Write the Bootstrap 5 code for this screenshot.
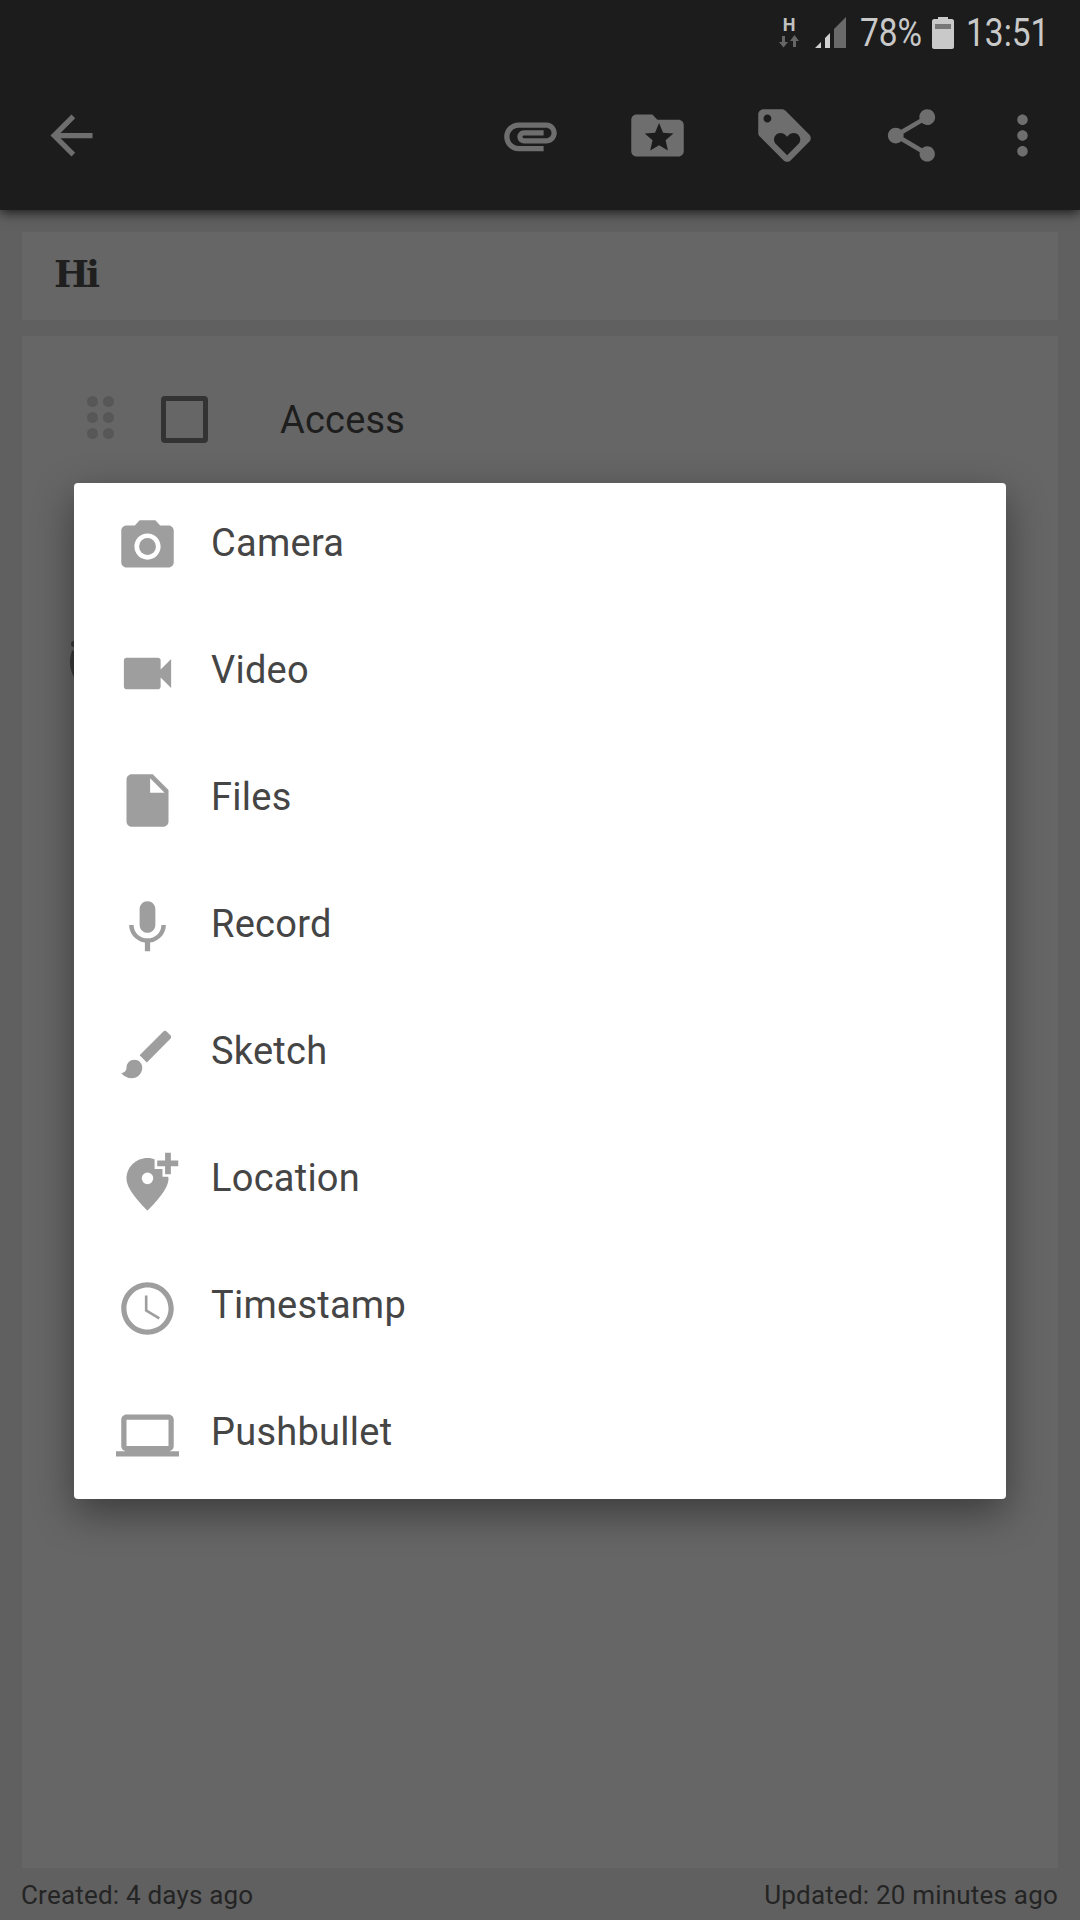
<!DOCTYPE html>
<html lang="en">
<head>
<meta charset="UTF-8" />
<meta name="viewport" content="width=device-width, initial-scale=1.0"/>
<title>Note attachments</title>
<link href="https://cdn.jsdelivr.net/npm/bootstrap@5.3.0/dist/css/bootstrap.min.css" rel="stylesheet">
<style>
  html, body { height: 1920px; overflow: hidden; }
  body { background: #606060; font-family: Roboto, sans-serif; color: #262626; position: relative; }
  .app-top { background: #1c1c1c; height: 210px; box-shadow: 0 2px 12px rgba(0,0,0,.8); position: relative; }
  .status-row { height: 66px; padding-right: 33px; color: #c9c9c9; font-size: 38px; line-height: 66px; }
  .status-text { display: block; transform: scaleX(.88); white-space: nowrap; flex: none; }
  .pct { width: 71px; transform-origin: left center; margin: 0 1px 0 12px; }
  .clock { width: 92px; transform-origin: right center; text-align: right; margin-left: 1px; }
  .net-icon { margin-right: 15px; }
  .tool-row { height: 144px; padding: 0 0 6px 40px; }
  .tool-row svg { width: 63px; height: 63px; fill: #6e6e6e; display: block; }
  .tool-icons { gap: 64px; padding-right: 26px; }
  .tool-icons svg:last-child { margin-left: -16px; }
  .sheet { background: #666; margin: 22px 22px 0; }
  .title-sheet { height: 88px; padding-left: 32px; font-family: "DejaVu Serif", serif; font-weight: 700; font-size: 37px; letter-spacing: -3px; line-height: 84px; color: #1f1f1f; }
  .list-sheet { margin-top: 16px; height: 1532px; padding: 60px 0 0 65px; position: relative; }
  .grip { width: 27px; height: 43px; display: grid; grid-template-columns: 11px 11px; gap: 5px; }
  .grip span { width: 11px; height: 11px; border-radius: 50%; background: #575757; }
  .box { width: 47px; height: 47px; border: 5px solid #333; border-radius: 4px; margin-left: 47px; }
  .item-text { font-size: 38px; line-height: 49px; letter-spacing: .2px; margin-left: 72px; color: #1e1e1e; }
  .peek { position: absolute; left: 46px; top: 303px; }
  .foot-row { padding: 11px 22px 0 21px; font-size: 26px; line-height: 32px; letter-spacing: .2px; color: #242424; }
  .picker { position: absolute; left: 74px; top: 483px; width: 932px; background: #fff; border-radius: 4px; box-shadow: 0 14px 40px rgba(0,0,0,.42); }
  .pick-row { height: 127px; color: #454545; font-size: 38px; letter-spacing: .25px; }
  .pick-row svg { width: 63px; height: 63px; fill: #9e9e9e; margin-left: 42px; flex: none; }
  .pick-row span { margin-left: 32px; position: relative; top: -3px; }
</style>
</head>
<body>

<div class="app-top">
  <div class="status-row d-flex justify-content-end align-items-center">
    <svg class="net-icon" width="20" height="40" viewBox="0 0 20 40">
      <text x="10" y="18" text-anchor="middle" font-family="Roboto" font-weight="700" font-size="18" fill="#c0c0c0">H</text>
      <path fill="#666" d="M3 23h3v6h3l-4.500 5.500L0 29h3zM14 34h3v-6h3l-4.500-6L11 28h3z"/>
    </svg>
    <svg width="34" height="32" viewBox="0 0 34 32">
      <path fill="#d0d0d0" d="M1 31l6-6v6zM11 21l5-5v15h-5z"/>
      <path fill="#6a6a6a" d="M20 12L32 0v31H20z"/>
    </svg>
    <span class="status-text pct">78%</span>
    <svg width="22" height="32" viewBox="0 0 22 32">
      <path fill="#c9c9c9" d="M6 0h10v2h4c1 0 2 1 2 2v26c0 1-1 2-2 2H2c-1 0-2-1-2-2V4c0-1 1-2 2-2h4z"/>
      <rect x="3" y="7" width="16" height="5" fill="#777"/>
    </svg>
    <span class="status-text clock">13:51</span>
  </div>
  <div class="tool-row d-flex justify-content-between align-items-center">
    <svg viewBox="0 0 24 24"><path d="M20 11H7.83l5.59-5.59L12 4l-8 8 8 8 1.41-1.41L7.83 13H20v-2z"/></svg>
    <div class="tool-icons d-flex align-items-center">
      <svg viewBox="0 0 24 24"><path d="M2 12.5C2 9.46 4.46 7 7.5 7H18c2.21 0 4 1.79 4 4s-1.79 4-4 4H9.5C8.12 15 7 13.88 7 12.5S8.12 10 9.5 10H17v2H9.41c-.55 0-.55 1 0 1H18c1.1 0 2-.9 2-2s-.9-2-2-2H7.5C5.57 9 4 10.57 4 12.5S5.57 16 7.5 16H17v2H7.5C4.46 18 2 15.54 2 12.5z"/></svg>
      <svg viewBox="0 0 24 24"><path fill-rule="evenodd" d="M20 6h-8l-2-2H4c-1.1 0-1.99.9-1.99 2L2 18c0 1.1.9 2 2 2h16c1.1 0 2-.9 2-2V8c0-1.1-.9-2-2-2zM12.6 7.2L14.14 10.94 18.06 11.27 15.08 13.85 15.98 17.68 12.6 15.7 9.22 17.68 10.12 13.85 7.14 11.27 11.06 10.94z"/></svg>
      <svg viewBox="0 0 24 24"><path fill-rule="evenodd" d="M21.41 11.58L12.41 2.58C12.05 2.22 11.55 2 11 2H4C2.9 2 2 2.9 2 4V11C2 11.55 2.22 12.05 2.59 12.42L11.59 21.42C11.95 21.78 12.45 22 13 22S14.05 21.78 14.41 21.41L21.41 14.41C21.78 14.05 22 13.55 22 13S21.77 11.94 21.41 11.58M5.5 7C4.67 7 4 6.33 4 5.5S4.67 4 5.5 4 7 4.67 7 5.5 6.33 7 5.5 7M17.27 15.27L13 19.54L8.73 15.27C8.28 14.81 8 14.19 8 13.5C8 12.12 9.12 11 10.5 11C11.19 11 11.82 11.28 12.27 11.74L13 12.46L13.73 11.73C14.18 11.28 14.81 11 15.5 11C16.88 11 18 12.12 18 13.5C18 14.19 17.72 14.82 17.27 15.27Z"/></svg>
      <svg viewBox="0 0 24 24"><path d="M18 16.08c-.76 0-1.44.3-1.96.77L8.91 12.7c.05-.23.09-.46.09-.7s-.04-.47-.09-.7l7.05-4.11c.54.5 1.25.81 2.04.81 1.66 0 3-1.34 3-3s-1.34-3-3-3-3 1.34-3 3c0 .24.04.47.09.7L8.04 9.81C7.5 9.31 6.79 9 6 9c-1.66 0-3 1.34-3 3s1.34 3 3 3c.79 0 1.5-.31 2.04-.81l7.12 4.16c-.05.21-.08.43-.08.65 0 1.61 1.31 2.92 2.92 2.92 1.61 0 2.92-1.31 2.92-2.92s-1.31-2.92-2.92-2.92z"/></svg>
      <svg viewBox="0 0 24 24"><path d="M12 8c1.1 0 2-.9 2-2s-.9-2-2-2-2 .9-2 2 .9 2 2 2zm0 2c-1.1 0-2 .9-2 2s.9 2 2 2 2-.9 2-2-.9-2-2-2zm0 6c-1.1 0-2 .9-2 2s.9 2 2 2 2-.9 2-2-.9-2-2-2z"/></svg>
    </div>
  </div>
</div>

<div class="sheet title-sheet">Hi</div>
<div class="sheet list-sheet">
  <div class="d-flex align-items-start">
    <div class="grip"><span></span><span></span><span></span><span></span><span></span><span></span></div>
    <div class="box"></div>
    <div class="item-text">Access</div>
  </div>
  <!-- edge of a row hidden behind the picker -->
  <svg class="peek" width="12" height="44" viewBox="0 0 12 44">
    <circle cx="6" cy="5" r="3" fill="#3a3a3a"/>
    <path d="M6 12Q1 25 8 38" fill="none" stroke="#3a3a3a" stroke-width="4"/>
  </svg>
</div>
<div class="foot-row d-flex justify-content-between">
  <span>Created: 4 days ago</span>
  <span>Updated: 20 minutes ago</span>
</div>

<div class="picker">
  <div class="pick-row d-flex align-items-center">
    <svg viewBox="0 0 24 24"><path fill-rule="evenodd" d="M9 2L7.17 4H4c-1.1 0-2 .9-2 2v12c0 1.1.9 2 2 2h16c1.1 0 2-.9 2-2V6c0-1.1-.9-2-2-2h-3.17L15 2H9zm3 15c-2.76 0-5-2.24-5-5s2.24-5 5-5 5 2.24 5 5-2.24 5-5 5z"/><circle cx="12" cy="12" r="3.2"/></svg>
    <span>Camera</span>
  </div>
  <div class="pick-row d-flex align-items-center">
    <svg viewBox="0 0 24 24"><path d="M17 10.5V7c0-.55-.45-1-1-1H4c-.55 0-1 .45-1 1v10c0 .55.45 1 1 1h12c.55 0 1-.45 1-1v-3.5l4 4v-11l-4 4z"/></svg>
    <span>Video</span>
  </div>
  <div class="pick-row d-flex align-items-center">
    <svg viewBox="0 0 24 24"><path fill-rule="evenodd" d="M6 2c-1.1 0-1.99.9-1.99 2L4 20c0 1.1.89 2 1.99 2H18c1.1 0 2-.9 2-2V8l-6-6H6zm7 7V3.5L18.5 9H13z"/></svg>
    <span>Files</span>
  </div>
  <div class="pick-row d-flex align-items-center">
    <svg viewBox="0 0 24 24"><path d="M12 14c1.66 0 2.99-1.34 2.99-3L15 5c0-1.66-1.34-3-3-3S9 3.34 9 5v6c0 1.66 1.34 3 3 3zm5.3-3c0 3-2.54 5.1-5.3 5.1S6.7 14 6.7 11H5c0 3.41 2.72 6.23 6 6.72V21h2v-3.28c3.28-.48 6-3.3 6-6.72h-1.7z"/></svg>
    <span>Record</span>
  </div>
  <div class="pick-row d-flex align-items-center">
    <svg viewBox="0 0 24 24"><path d="M7 14c-1.66 0-3 1.34-3 3 0 1.31-1.16 2-2 2 .92 1.22 2.49 2 4 2 2.21 0 4-1.79 4-4 0-1.66-1.34-3-3-3zm13.71-9.37l-1.34-1.34c-.39-.39-1.02-.39-1.41 0L9 12.25 11.75 15l8.96-8.96c.39-.39.39-1.03 0-1.41z"/></svg>
    <span>Sketch</span>
  </div>
  <div class="pick-row d-flex align-items-center">
    <svg viewBox="0 0 24 24"><path fill-rule="evenodd" d="M12 3c-4.4 0-8 3.4-8 8 0 4.6 8 12 8 12s8-7.4 8-12c0-4.6-3.6-8-8-8zm0 10a2.2 2.2 0 1 1 0-4.4 2.2 2.2 0 0 1 0 4.4z"/><path d="M18.7 1h2.2v3h2.8v2.2h-2.8v3h-2.2v-3h-3V4h3z" stroke="#fff" stroke-width="2" paint-order="stroke"/></svg>
    <span>Location</span>
  </div>
  <div class="pick-row d-flex align-items-center">
    <svg viewBox="0 0 24 24"><path d="M11.99 2C6.47 2 2 6.48 2 12s4.47 10 9.99 10C17.52 22 22 17.52 22 12S17.52 2 11.99 2zM12 20c-4.42 0-8-3.58-8-8s3.58-8 8-8 8 3.58 8 8-3.58 8-8 8z"/><path d="M12 7h-1v6l5.25 3.15.5-.8-4.75-2.85z"/></svg>
    <span>Timestamp</span>
  </div>
  <div class="pick-row d-flex align-items-center">
    <svg viewBox="0 0 24 24"><path d="M20 18c1.1 0 1.99-.9 1.99-2L22 6c0-1.1-.9-2-2-2H4c-1.1 0-2 .9-2 2v10c0 1.1.9 2 2 2H0v2h24v-2h-4zM4 6h16v10H4V6z"/></svg>
    <span>Pushbullet</span>
  </div>
</div>

<script src="https://cdn.jsdelivr.net/npm/bootstrap@5.3.0/dist/js/bootstrap.bundle.min.js"></script>
</body>
</html>
